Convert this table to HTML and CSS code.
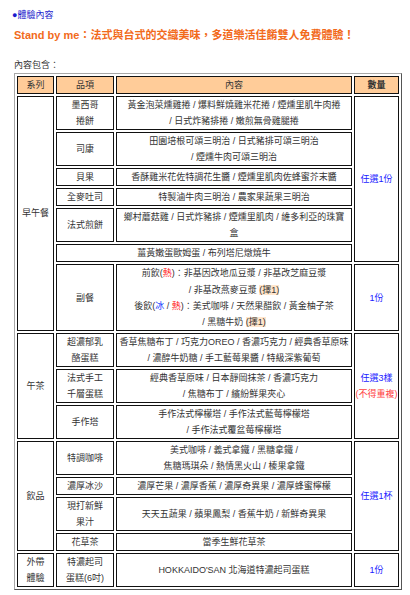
FILE: index.html
```html
<!DOCTYPE html>
<html lang="zh-Hant">
<head>
<meta charset="utf-8">
<title>體驗內容</title>
<link rel="stylesheet" href="styles.css">
</head>
<body>
<div class="page">
  <p class="sec">●體驗內容</p>
  <h1 class="title">Stand by me：法式與台式的交織美味，多道樂活佳餚雙人免費體驗！</h1>
  <p class="lead">內容包含：</p>
  <table class="menu">
    <colgroup><col class="c1"><col class="c2"><col class="c3"><col class="c4"></colgroup>
    <thead>
      <tr><th>系列</th><th>品項</th><th>內容</th><th class="qh">數量</th></tr>
    </thead>
    <tbody>
      <tr>
        <td rowspan="7">早午餐</td>
        <td>墨西哥<br>捲餅</td>
        <td>黃金泡菜燻雞捲 / 爆料鮮燒雞米花捲 / 煙燻里肌牛肉捲<br>/ 日式炸豬排捲 / 嫩煎無骨雞腿捲</td>
        <td rowspan="6" class="q">任選1份</td>
      </tr>
      <tr>
        <td>司康</td>
        <td>田園培根可頌三明治 / 日式豬排可頌三明治<br>/ 煙燻牛肉可頌三明治</td>
      </tr>
      <tr>
        <td>貝果</td>
        <td>香酥雞米花佐特調花生醬 / 煙燻里肌肉佐蜂蜜芥末醬</td>
      </tr>
      <tr>
        <td>全麥吐司</td>
        <td>特製滷牛肉三明治 / 農家果蔬果三明治</td>
      </tr>
      <tr>
        <td>法式煎餅</td>
        <td>鄉村蘑菇雞 / 日式炸豬排 / 煙燻里肌肉 / 維多利亞的珠寶<br>盒</td>
      </tr>
      <tr>
        <td colspan="2">薑黃嫩蛋歐姆蛋 / 布列塔尼燉燒牛</td>
      </tr>
      <tr>
        <td>副餐</td>
        <td>前飲(<span class="hot">熱</span>)：非基因改地瓜豆漿 / 非基改芝麻豆漿<br>/ 非基改燕麥豆漿 <span class="pick">(擇1)</span><br>後飲(<span class="cold">冰</span> / <span class="hot">熱</span>)：美式咖啡 / 天然果醋飲 / 黃金柚子茶<br>/ 黑糖牛奶 <span class="pick">(擇1)</span></td>
        <td class="q">1份</td>
      </tr>
      <tr>
        <td rowspan="3">午茶</td>
        <td>超濃郁乳<br>酪蛋糕</td>
        <td>香草焦糖布丁 / 巧克力OREO / 香濃巧克力 / 經典香草原味<br>/ 濃醇牛奶糖 / 手工藍莓果醬 / 特級深紫葡萄</td>
        <td rowspan="3" class="q">任選3樣<br><span class="note">(不得重複)</span></td>
      </tr>
      <tr>
        <td>法式手工<br>千層蛋糕</td>
        <td>經典香草原味 / 日本靜岡抹茶 / 香濃巧克力<br>/ 焦糖布丁 / 繽紛鮮果夾心</td>
      </tr>
      <tr>
        <td>手作塔</td>
        <td>手作法式檸檬塔 / 手作法式藍莓檸檬塔<br>/ 手作法式覆盆莓檸檬塔</td>
      </tr>
      <tr>
        <td rowspan="4">飲品</td>
        <td>特調咖啡</td>
        <td>美式咖啡 / 義式拿鐵 / 黑糖拿鐵 /<br>焦糖瑪琪朵 / 熱情黑火山 / 榛果拿鐵</td>
        <td rowspan="4" class="q">任選1杯</td>
      </tr>
      <tr>
        <td>濃厚冰沙</td>
        <td>濃厚芒果 / 濃厚香蕉 / 濃厚奇異果 / 濃厚蜂蜜檸檬</td>
      </tr>
      <tr>
        <td>現打新鮮<br>果汁</td>
        <td>天天五蔬果 / 蘋果鳳梨 / 香蕉牛奶 / 新鮮奇異果</td>
      </tr>
      <tr>
        <td>花草茶</td>
        <td>當季生鮮花草茶</td>
      </tr>
      <tr>
        <td>外帶<br>體驗</td>
        <td>特濃起司<br>蛋糕(6吋)</td>
        <td>HOKKAIDO'SAN 北海道特濃起司蛋糕</td>
        <td class="q">1份</td>
      </tr>
    </tbody>
  </table>
</div>
</body>
</html>
```

FILE: styles.css
```css
html, body {
  margin: 0;
  padding: 0;
  background: #ffffff;
}

body {
  font-family: "Liberation Sans", "Noto Sans CJK TC", sans-serif;
  color: #333333;
}

.page {
  padding: 7px 0 0 14px;
}

.sec {
  margin: 0 0 0 -2px;
  font-size: 9px;
  line-height: 16px;
  color: #1a1acc;
}

.title {
  margin: 4px 0 0 0;
  font-size: 11px;
  line-height: 16px;
  font-weight: bold;
  color: #f26a1b;
}

.lead {
  margin: 14px 0 0 0;
  font-size: 9px;
  line-height: 16px;
  color: #333333;
}

.menu {
  table-layout: fixed;
  width: 380px;
  border-collapse: separate;
  border-spacing: 2px;
  border-style: solid;
  border-width: 1px;
  border-color: #a8a8a8 #555555 #555555 #a8a8a8;
  font-size: 9px;
  line-height: 16.05px;
}

.c1 { width: 37px; }
.c2 { width: 58px; }
.c3 { width: 236px; }
.c4 { width: 45px; }

.menu th,
.menu td {
  border: 1px solid #111111;
  padding: 0;
  text-align: center;
  vertical-align: middle;
  white-space: nowrap;
  font-weight: normal;
}

.menu th {
  background: #ffcc99;
  color: #333333;
}

.menu th.qh {
  font-weight: bold;
}

.q {
  color: #1a1aff;
}

.note {
  color: #ff4040;
}

.hot {
  color: #ff2020;
}

.cold {
  color: #2040ff;
}

.pick {
  background: #ffe6cc;
}
```
